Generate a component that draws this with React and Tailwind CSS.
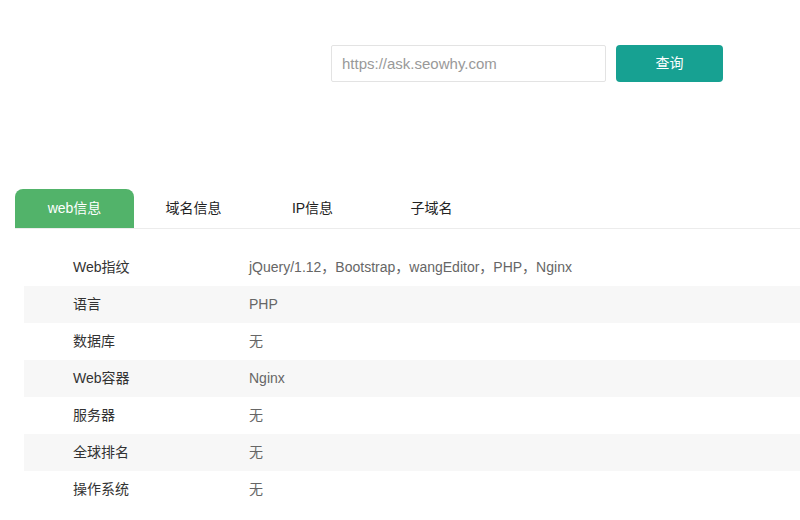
const rows = [
  ["Web指纹", "jQuery/1.12，Bootstrap，wangEditor，PHP，Nginx"],
  ["语言", "PHP"],
  ["数据库", "无"],
  ["Web容器", "Nginx"],
  ["服务器", "无"],
  ["全球排名", "无"],
  ["操作系统", "无"],
];

const tabs = ["web信息", "域名信息", "IP信息", "子域名"];

export default function App() {
  return (
    <div
      className="w-[800px] h-[520px] overflow-hidden bg-white"
      style={{ fontFamily: '"Liberation Sans", "Noto Sans CJK SC", sans-serif' }}
    >
      {/* search bar */}
      <div className="flex pt-[45px] pl-[331px] gap-[10px]">
        <input
          className="w-[275px] h-[37px] border border-[#e3e3e3] rounded-[2px] px-[10px] text-[15px] text-[#333] placeholder:text-[#999] outline-none"
          placeholder="https://ask.seowhy.com"
        />
        <button className="w-[107px] h-[37px] rounded-[4px] bg-[#17a192] text-white text-[14px]">
          查询
        </button>
      </div>

      {/* tabs */}
      <div className="mt-[107px] ml-[15px] flex border-b border-[#ececec]">
        {tabs.map((t, i) => (
          <div
            key={t}
            className={
              i === 0
                ? "w-[119px] h-[39px] flex items-center justify-center rounded-t-[8px] bg-[#52b36a] text-white text-[14px]"
                : "w-[119px] h-[39px] flex items-center justify-center text-[#222] text-[14px]"
            }
          >
            {t}
          </div>
        ))}
      </div>

      {/* info rows */}
      <div className="mt-[20px] ml-[24px]">
        {rows.map(([k, v], i) => (
          <div
            key={k}
            className={
              i % 2 === 1
                ? "flex items-center h-[37px] bg-[#f7f7f7] text-[14px]"
                : "flex items-center h-[37px] text-[14px]"
            }
          >
            <div className="w-[225px] pl-[49px] text-[#333]">{k}</div>
            <div className="text-[#666]">{v}</div>
          </div>
        ))}
      </div>
    </div>
  );
}
